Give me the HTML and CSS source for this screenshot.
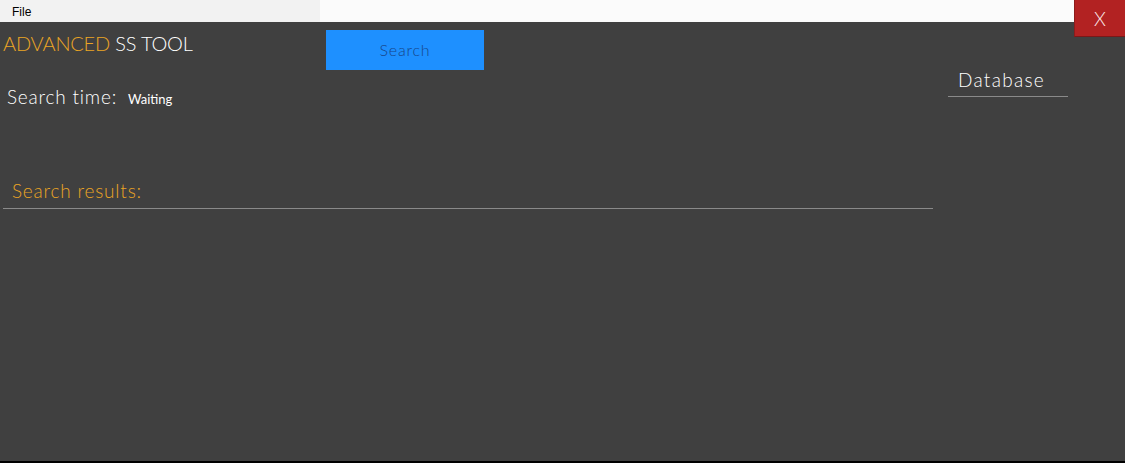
FILE: index.html
```
<!DOCTYPE html>
<html lang="en">
<head>
    <meta charset="UTF-8">
    <title>Advanced SS Tool</title>
    <link rel="stylesheet" href="styles.css">
</head>
<body>
    <div class="window">
        <div class="menubar">
            <div class="menu-strip"><span class="menu-item">File</span></div>
            <div class="menu-rest"></div>
        </div>
        <button class="close-btn">X</button>

        <div class="main">
            <div class="left">
                <div class="top-row">
                    <div class="title"><span class="accent">ADVANCED</span> SS TOOL</div>
                    <button class="search-btn">Search</button>
                </div>
                <div class="time-row">
                    <span class="time-label">Search time:</span>
                    <span class="time-value">Waiting</span>
                </div>
                <div class="results">
                    <div class="results-label">Search results:</div>
                </div>
            </div>
            <div class="right">
                <div class="db-label">Database</div>
            </div>
        </div>
        <div class="taskbar"></div>
    </div>
</body>
</html>
```

FILE: styles.css
```
html, body {
    margin: 0;
    padding: 0;
}

body {
    width: 1125px;
    height: 463px;
    overflow: hidden;
    background-color: #404040;
    font-family: "Lato", "Liberation Sans", sans-serif;
}

.window {
    position: relative;
    height: 463px;
    display: flex;
    flex-direction: column;
}

/* menu bar at the top */
.menubar {
    height: 22px;
    display: flex;
}

.menu-strip {
    width: 320px;
    background-color: #f2f2f2;
}

.menu-rest {
    flex: 1;
    background-color: #fbfbfb;
}

.menu-item {
    display: inline-block;
    padding: 3px 0 0 12px;
    font-family: "Liberation Sans", sans-serif;
    font-size: 12px;
    color: #000;
}

.close-btn {
    position: absolute;
    top: 0;
    right: 0;
    width: 51px;
    height: 37px;
    border: none;
    border-left: 1px solid #8c1c1c;
    border-bottom: 1px solid #7a1818;
    background-color: #b22222;
    color: #fbeaea;
    font-family: "Lato", sans-serif;
    font-size: 19px;
    font-weight: 300;
    padding: 0;
}

.main {
    flex: 1;
    display: flex;
}

.left {
    width: 930px;
    padding-left: 3px;
}

.top-row {
    display: flex;
    align-items: flex-start;
}

.title {
    width: 323px;
    padding-top: 9px;
    font-size: 20px;
    font-weight: 300;
    color: #ffffff;
    letter-spacing: -0.2px;
}

.title .accent {
    color: #eba524;
}

.search-btn {
    margin-top: 8px;
    padding-bottom: 2px;
    width: 158px;
    height: 40px;
    border: none;
    background-color: #1e90ff;
    color: #17468a;
    font-family: "Lato", sans-serif;
    font-size: 16px;
    font-weight: 300;
    letter-spacing: 0.8px;
}

.time-row {
    margin-top: 15px;
    padding-left: 4px;
    display: flex;
    align-items: baseline;
    gap: 11px;
    color: #ffffff;
}

.time-label {
    font-size: 19px;
    font-weight: 300;
    letter-spacing: 0.8px;
}

.time-value {
    font-size: 13px;
}

.results {
    margin-top: 71px;
    border-bottom: 1px solid #8a8a8a;
    padding: 0 0 6px 9px;
}

.results-label {
    font-size: 19px;
    font-weight: 300;
    color: #eba524;
    letter-spacing: 0.8px;
}

.right {
    padding: 46px 0 0 15px;
}

.db-label {
    width: 110px;
    padding: 0 0 5px 10px;
    border-bottom: 1px solid #8a8a8a;
    font-size: 19px;
    font-weight: 300;
    color: #ffffff;
    letter-spacing: 1.3px;
}

.taskbar {
    height: 2px;
    background-color: #000;
}
```
